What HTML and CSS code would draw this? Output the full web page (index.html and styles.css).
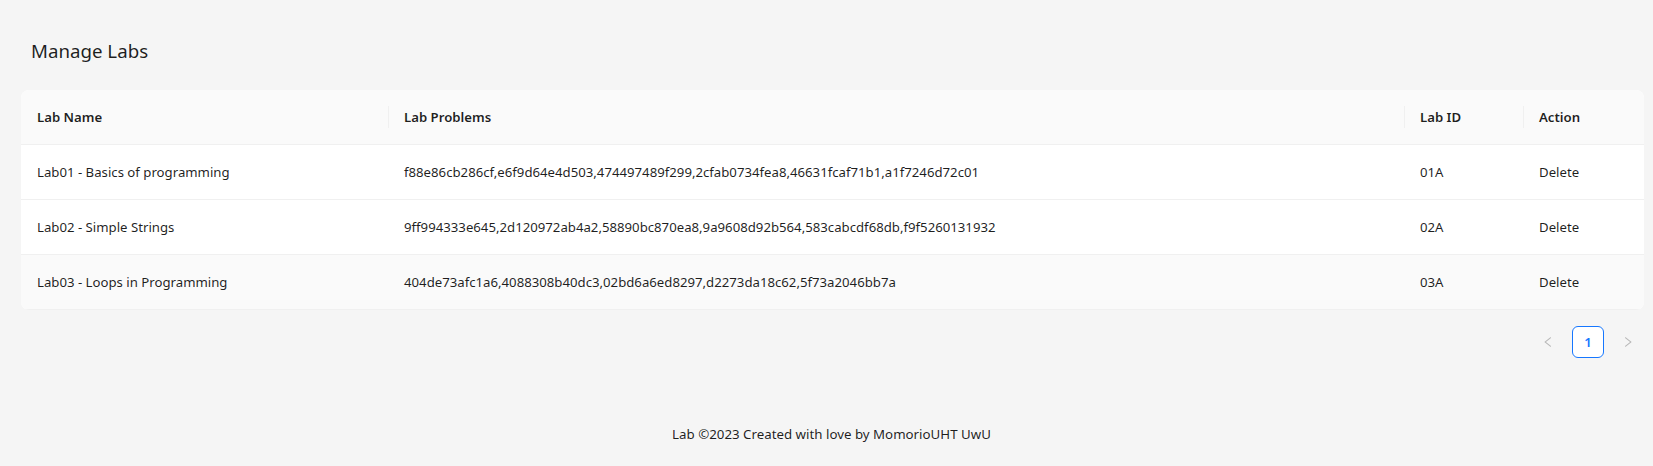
FILE: index.html
```html
<!DOCTYPE html>
<html lang="en">
<head>
<meta charset="utf-8">
<title>Manage Labs</title>
<link rel="stylesheet" href="styles.css">
</head>
<body>
<div class="layout">
  <main class="content">
    <h4 class="title">Manage Labs</h4>
    <div class="table-wrap">
      <table class="table">
        <thead>
          <tr>
            <th class="col-name">Lab Name</th>
            <th class="col-problems">Lab Problems</th>
            <th class="col-id">Lab ID</th>
            <th class="col-action">Action</th>
          </tr>
        </thead>
        <tbody>
          <tr>
            <td>Lab01 - Basics of programming</td>
            <td>f88e86cb286cf,e6f9d64e4d503,474497489f299,2cfab0734fea8,46631fcaf71b1,a1f7246d72c01</td>
            <td>01A</td>
            <td><a class="action">Delete</a></td>
          </tr>
          <tr>
            <td>Lab02 - Simple Strings</td>
            <td>9ff994333e645,2d120972ab4a2,58890bc870ea8,9a9608d92b564,583cabcdf68db,f9f5260131932</td>
            <td>02A</td>
            <td><a class="action">Delete</a></td>
          </tr>
          <tr class="hover">
            <td>Lab03 - Loops in Programming</td>
            <td>404de73afc1a6,4088308b40dc3,02bd6a6ed8297,d2273da18c62,5f73a2046bb7a</td>
            <td>03A</td>
            <td><a class="action">Delete</a></td>
          </tr>
        </tbody>
      </table>
    </div>
    <ul class="pagination">
      <li class="page-arrow disabled">
        <svg viewBox="64 64 896 896" width="12" height="12" fill="currentColor"><path d="M724 218.3V141c0-6.7-7.7-10.4-12.9-6.3L260.3 486.8a31.86 31.86 0 000 50.3l450.8 352.1c5.3 4.1 12.9.4 12.9-6.3v-77.3c0-4.9-2.3-9.6-6.1-12.6l-360-281 360-281.1c3.8-3 6.1-7.7 6.1-12.6z"/></svg>
      </li>
      <li class="page-item active">1</li>
      <li class="page-arrow disabled">
        <svg viewBox="64 64 896 896" width="12" height="12" fill="currentColor"><path d="M765.7 486.8L314.9 134.7A7.97 7.97 0 00302 141v77.3c0 4.9 2.3 9.6 6.1 12.6l360 281.1-360 281.1c-3.9 3-6.1 7.7-6.1 12.6V883c0 6.7 7.7 10.4 12.9 6.3l450.8-352.1a31.96 31.96 0 000-50.4z"/></svg>
      </li>
    </ul>
  </main>
  <footer class="footer">Lab ©2023 Created with love by MomorioUHT UwU</footer>
</div>
</body>
</html>
```

FILE: styles.css
```css
* { box-sizing: border-box; }

html, body {
  margin: 0;
  padding: 0;
}

body {
  background: #f5f5f5;
  font-family: "Noto Sans", "Open Sans", sans-serif;
  font-size: 13.2px;
  line-height: 22px;
  color: rgba(0, 0, 0, 0.88);
}

.layout {
  min-height: 100vh;
  display: flex;
  flex-direction: column;
}

.content {
  flex: 1;
  padding: 37px 9px 0 21px;
}

.title {
  margin: 0 0 25px 10px;
  font-size: 18.7px;
  line-height: 28px;
  font-weight: 400;
}

.table-wrap {
  background: #fff;
  border-radius: 8px;
  overflow: hidden;
}

.table {
  width: 100%;
  border-collapse: separate;
  border-spacing: 0;
  table-layout: fixed;
}

.col-name { width: 367px; }
.col-id { width: 119px; }
.col-action { width: 121px; }

.table th,
.table td {
  padding: 16px;
  text-align: left;
  border-bottom: 1px solid #f0f0f0;
  white-space: nowrap;
  overflow: hidden;
}

.table th {
  position: relative;
  background: #fafafa;
  font-weight: 600;
}

.table th + th::before {
  content: "";
  position: absolute;
  left: 0;
  top: 50%;
  width: 1px;
  height: 22px;
  transform: translateY(-50%);
  background: #f0f0f0;
}

.table tr.hover td {
  background: #fafafa;
}

.action {
  color: rgba(0, 0, 0, 0.88);
  cursor: pointer;
}

.pagination {
  list-style: none;
  margin: 16px 0 0;
  padding: 0;
  display: flex;
  justify-content: flex-end;
  gap: 8px;
}

.page-arrow,
.page-item {
  min-width: 32px;
  height: 32px;
  display: flex;
  align-items: center;
  justify-content: center;
  border-radius: 6px;
}

.page-arrow.disabled {
  color: rgba(0, 0, 0, 0.25);
}

.page-item.active {
  background: #fff;
  border: 1px solid #1677ff;
  color: #1677ff;
  font-weight: 600;
}

.footer {
  padding: 24px 0 21px 10px;
  font-size: 13.3px;
  text-align: center;
}
```
